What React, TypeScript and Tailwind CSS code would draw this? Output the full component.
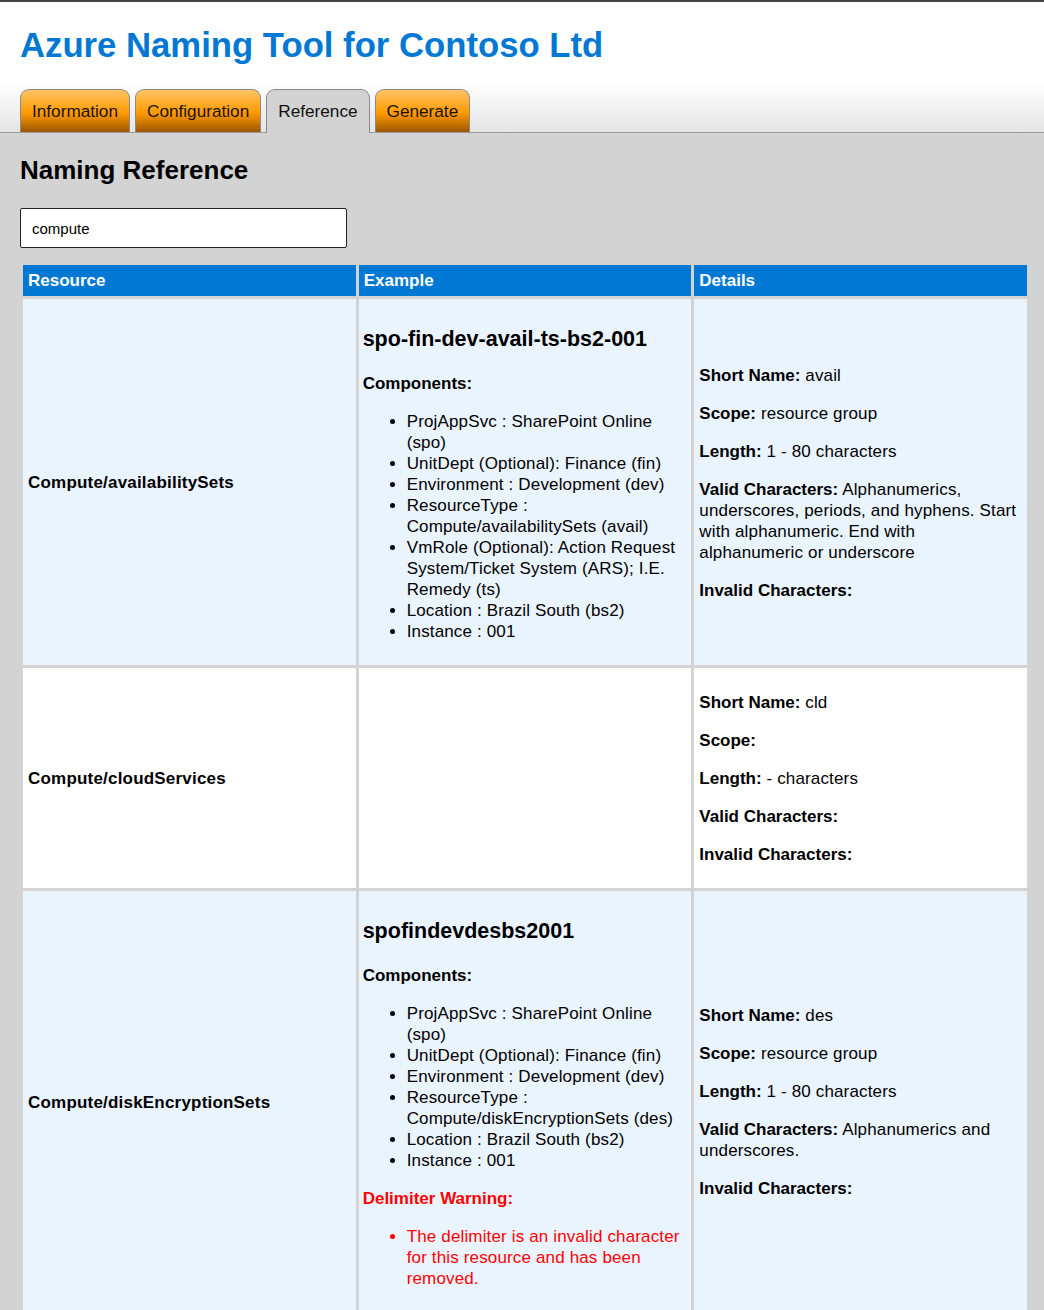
import React, { useState } from "react";

type Row = {
  resource: string;
  example?: string;
  components?: string[];
  warning?: string;
  shortName: string;
  scope: string;
  length: string;
  valid: string;
  invalid: string;
};

const rows: Row[] = [
  {
    resource: "Compute/availabilitySets",
    example: "spo-fin-dev-avail-ts-bs2-001",
    components: [
      "ProjAppSvc : SharePoint Online (spo)",
      "UnitDept (Optional): Finance (fin)",
      "Environment : Development (dev)",
      "ResourceType : Compute/availabilitySets (avail)",
      "VmRole (Optional): Action Request System/Ticket System (ARS); I.E. Remedy (ts)",
      "Location : Brazil South (bs2)",
      "Instance : 001",
    ],
    shortName: "avail",
    scope: "resource group",
    length: "1 - 80 characters",
    valid:
      "Alphanumerics, underscores, periods, and hyphens. Start with alphanumeric. End with alphanumeric or underscore",
    invalid: "",
  },
  {
    resource: "Compute/cloudServices",
    shortName: "cld",
    scope: "",
    length: "- characters",
    valid: "",
    invalid: "",
  },
  {
    resource: "Compute/diskEncryptionSets",
    example: "spofindevdesbs2001",
    components: [
      "ProjAppSvc : SharePoint Online (spo)",
      "UnitDept (Optional): Finance (fin)",
      "Environment : Development (dev)",
      "ResourceType : Compute/diskEncryptionSets (des)",
      "Location : Brazil South (bs2)",
      "Instance : 001",
    ],
    warning: "The delimiter is an invalid character for this resource and has been removed.",
    shortName: "des",
    scope: "resource group",
    length: "1 - 80 characters",
    valid: "Alphanumerics and underscores.",
    invalid: "",
  },
];

const tabs = ["Information", "Configuration", "Reference", "Generate"];

const Detail: React.FC<{ label: string; value: string }> = ({ label, value }) => (
  <p className="my-[17px]">
    <b className="tracking-normal">{label}:</b> {value}
  </p>
);

const App: React.FC = () => {
  const [filter, setFilter] = useState("compute");

  return (
    <div
      className="min-h-[1310px] bg-[#d3d3d3] text-black text-[17px] leading-[21px]"
      style={{ fontFamily: '"Liberation Sans", Arial, sans-serif' }}
    >
      <div className="border-t-2 border-[#444] bg-[linear-gradient(to_bottom,#ffffff_62%,#e4e4e4)] border-b border-b-[#9a9a9a]">
        <h1 className="pl-[20px] pt-[24px] text-[34.7px] leading-[38px] font-bold text-[#0078d4]">
          Azure Naming Tool for Contoso Ltd
        </h1>
        <div className="flex gap-[5px] pl-[20px] mt-[25px] -mb-px text-[17.2px]">
          {tabs.map((t) =>
            t === "Reference" ? (
              <div
                key={t}
                className="h-[44px] px-[11px] flex items-center rounded-t-[9px] border border-b-0 border-[#8a8a8a] bg-[#d3d3d3] text-[#111]"
              >
                {t}
              </div>
            ) : (
              <div
                key={t}
                className="h-[43px] px-[11px] flex items-center rounded-t-[9px] border border-b-0 border-[#8a8a8a] bg-[linear-gradient(to_bottom,#ffc466,#ff9a00_55%,#9a5600)] text-[#1a1200]"
              >
                {t}
              </div>
            )
          )}
        </div>
      </div>

      <div className="px-[20px]">
        <h2 className="pt-[22px] text-[26px] leading-[30px] font-bold">Naming Reference</h2>
        <input
          value={filter}
          onChange={(e) => setFilter(e.target.value)}
          className="mt-[23px] w-[327px] h-[40px] px-[11px] text-[15px] bg-white border border-[#222] rounded-[2px] outline-none"
        />

        <table className="mt-[14px] w-[1010px] table-fixed border-separate border-spacing-[3px]">
          <thead>
            <tr>
              {["Resource", "Example", "Details"].map((h) => (
                <th
                  key={h}
                  className="bg-[#0078d4] text-white text-left font-bold px-[5px] py-[5px] leading-[21px]"
                >
                  {h}
                </th>
              ))}
            </tr>
          </thead>
          <tbody>
            {rows.map((r, i) => (
              <tr key={r.resource} className={i % 2 === 0 ? "bg-[#eaf4fe]" : "bg-white"}>
                <td className="align-middle px-[5px] pt-[7px] pb-[6px] font-bold tracking-[0.2px]">{r.resource}</td>
                <td className="align-middle pl-[4px] pr-[5px] pt-[7px] pb-[6px] tracking-[0.15px]">
                  {r.example && (
                    <div>
                      <h3 className="mt-[21px] mb-[22px] text-[21.5px] leading-[24px] font-bold tracking-normal">
                        {r.example}
                      </h3>
                      <p className="my-[17px] font-bold tracking-normal">Components:</p>
                      <ul className="my-[17px] pl-[44px] list-disc">
                        {r.components?.map((c) => (
                          <li key={c}>{c}</li>
                        ))}
                      </ul>
                      {r.warning && (
                        <div className="text-[#ff0000]">
                          <p className="my-[17px] font-bold tracking-normal">Delimiter Warning:</p>
                          <ul className="my-[17px] pl-[44px] list-disc">
                            <li>{r.warning}</li>
                          </ul>
                        </div>
                      )}
                    </div>
                  )}
                </td>
                <td className="align-middle px-[5px] pt-[7px] pb-[6px] tracking-[0.15px]">
                  <Detail label="Short Name" value={r.shortName} />
                  <Detail label="Scope" value={r.scope} />
                  <Detail label="Length" value={r.length} />
                  <Detail label="Valid Characters" value={r.valid} />
                  <Detail label="Invalid Characters" value={r.invalid} />
                </td>
              </tr>
            ))}
          </tbody>
        </table>
      </div>
    </div>
  );
};

export default App;
